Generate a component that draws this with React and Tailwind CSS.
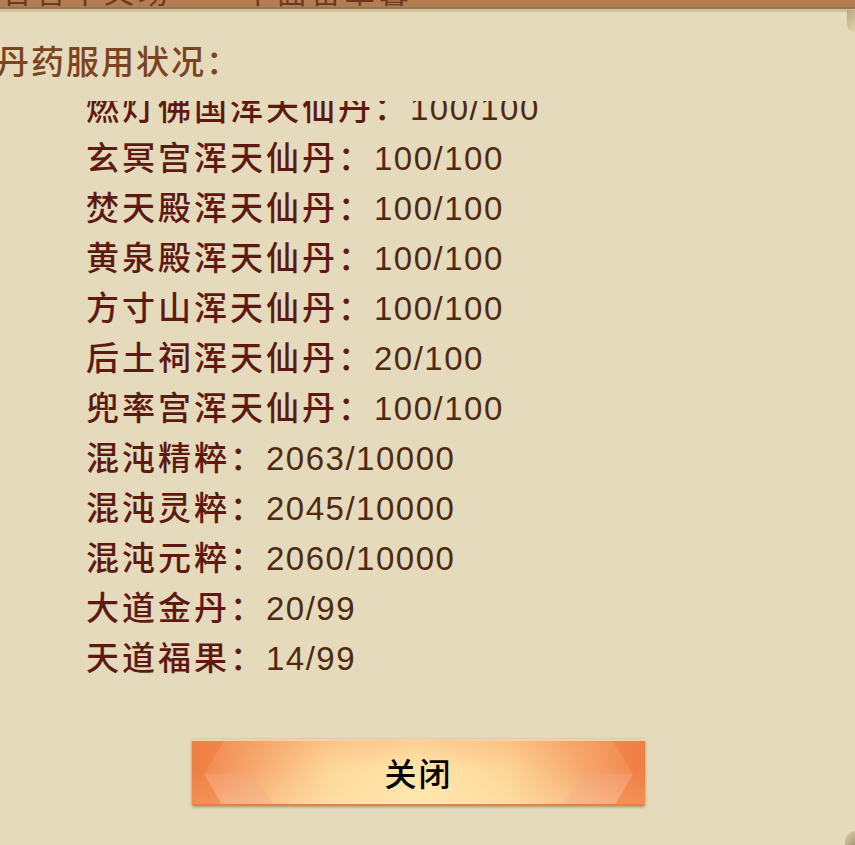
const items = [
  ['燃灯佛国浑天仙丹', '100/100'],
  ['玄冥宫浑天仙丹', '100/100'],
  ['焚天殿浑天仙丹', '100/100'],
  ['黄泉殿浑天仙丹', '100/100'],
  ['方寸山浑天仙丹', '100/100'],
  ['后土祠浑天仙丹', '20/100'],
  ['兜率宫浑天仙丹', '100/100'],
  ['混沌精粹', '2063/10000'],
  ['混沌灵粹', '2045/10000'],
  ['混沌元粹', '2060/10000'],
  ['大道金丹', '20/99'],
  ['天道福果', '14/99'],
];

const Row = ({ label, value }) => (
  <div className="h-[50px] leading-[50px] whitespace-nowrap">
    <span className="text-[#5e1a12] tracking-[3px]">{label}：</span>
    <span className="text-[#4f2a12] tracking-[1.5px] font-['Liberation_Sans','Noto_Sans_CJK_SC',sans-serif]">{value}</span>
  </div>
);

export default function App() {
  return (
    <div className="relative w-[855px] h-[845px] overflow-hidden bg-[#e5dabb] font-['Noto_Sans_CJK_SC','Noto_Sans_CJK_JP',sans-serif]">
      {/* top bar of the window behind, cut off */}
      <div className="h-[7px] overflow-hidden bg-[#b47c52]">
        <div className="-mt-[26px] pl-[2px] text-[30px] leading-[32px] text-[#6a3a1e] whitespace-nowrap tracking-[4px]">
          合言不义场 <span className="ml-[60px]">十面留翠馨</span>
        </div>
      </div>
      <div className="h-[2px] bg-[#8f7758]" />
      <div className="h-[3px] bg-[#d2c195]" />

      <div className="mt-[28px] -ml-[4px] text-[33px] leading-[40px] text-[#7a4421] font-medium tracking-[2px]">
        丹药服用状况：
      </div>

      <div className="mt-[21px] h-[600px] overflow-hidden pl-[86px] text-[33px] font-medium">
        <div className="-mt-[20px]">
          {items.map(([l, v]) => (
            <Row key={l} label={l} value={v} />
          ))}
        </div>
      </div>

      <div className="mt-[38px] pl-[192px]">
        <button className="relative w-[453px] h-[67px] overflow-hidden rounded-[2px] border-t-2 border-t-[#fbcfa6] border-b-2 border-b-[#e8804a] shadow-[0_1px_3px_rgba(90,60,30,0.45)] bg-[linear-gradient(90deg,#f0834a_0%,#f5a46a_12%,#fdd699_30%,#ffe6ab_50%,#fdd496_70%,#f5a368_88%,#f0824a_100%)]">
          <div className="absolute inset-0 bg-[linear-gradient(180deg,rgba(245,140,80,0.25)_0%,rgba(255,255,255,0)_45%,rgba(255,236,180,0.35)_100%)]" />
          <svg className="absolute left-0 top-0" width="90" height="67" viewBox="0 0 90 67">
            <path d="M0 0 L32 0 L12 33 L32 67 L0 67 Z" fill="#ef7a40" opacity="0.55" />
            <path d="M12 33 L60 33 L85 67 L32 67 Z" fill="#f6a68a" opacity="0.3" />
          </svg>
          <svg className="absolute right-0 top-0" width="90" height="67" viewBox="0 0 90 67">
            <path d="M90 0 L58 0 L78 33 L58 67 L90 67 Z" fill="#ef7a40" opacity="0.55" />
            <path d="M78 33 L30 33 L5 67 L58 67 Z" fill="#f6a68a" opacity="0.3" />
          </svg>
          <span className="relative text-[32px] leading-[63px] text-black font-medium tracking-[2px]">关闭</span>
        </button>
      </div>

      {/* curled page corners */}
      <div className="absolute right-0 top-[10px] w-[8px] h-[22px] rounded-bl-[8px] bg-[linear-gradient(135deg,#b9a67a,#e2d6b2)]" />
      <div className="absolute right-0 bottom-0 w-[10px] h-[14px] rounded-tl-[10px] bg-[linear-gradient(315deg,#a99670,#e5dabb)]" />
    </div>
  );
}
